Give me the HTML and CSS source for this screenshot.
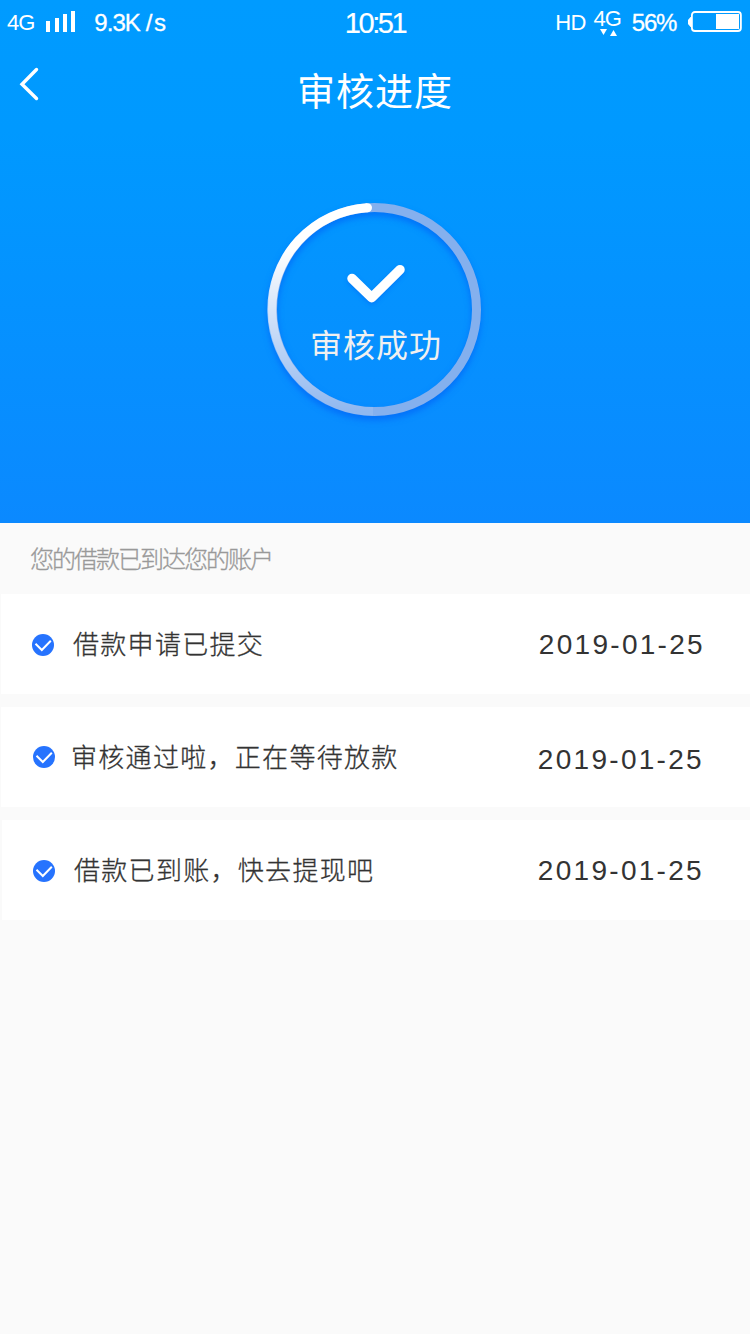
FILE: index.html
```
<!DOCTYPE html>
<html lang="zh-CN">
<head>
    <meta charset="UTF-8">
    <meta name="viewport" content="width=device-width, initial-scale=1.0">
    <title>审核进度</title>
    <link rel="stylesheet" href="styles.css">
</head>
<body>

    <div class="hero">
        <div class="statusBar">
            <div class="statusLeft">
                <span class="net">4G</span>
                <svg class="signal" width="30" height="21" viewBox="0 0 30 21" fill="#fff">
                    <rect x="0" y="10" width="4" height="11"/>
                    <rect x="9" y="7" width="4" height="14"/>
                    <rect x="17" y="3" width="4" height="18"/>
                    <rect x="25" y="0" width="4" height="21"/>
                </svg>
                <span class="speed">9.3K<span class="unit">/s</span></span>
            </div>
            <div class="time">10:51</div>
            <div class="statusRight">
                <span class="hd">HD</span>
                <div class="data">
                    <span class="net">4G</span>
                    <svg width="17" height="7" viewBox="0 0 17 7" fill="#fff">
                        <path d="M0 0h7L3.500 6z"/>
                        <path d="M10 7h7L13.500 1z"/>
                    </svg>
                </div>
                <span class="percent">56%</span>
                <svg class="battery" width="54" height="21" viewBox="0 0 54 21">
                    <path d="M4 6H2.500L0 9v4l2.500 3H4z" fill="#fff"/>
                    <rect x="3.900" y="1" width="49" height="19" rx="3" fill="none" stroke="#fff" stroke-width="1.800"/>
                    <rect x="28" y="3" width="23" height="15" fill="#fff"/>
                </svg>
            </div>
        </div>

        <div class="navBar">
            <svg class="back" width="20" height="34" viewBox="0 0 20 34">
                <path d="M17.500 2.500L3 17.200 17.500 31.500" fill="none" stroke="#fff" stroke-width="3.400" stroke-linecap="round"/>
            </svg>
            <h1>审核进度</h1>
        </div>

        <div class="progress">
            <svg class="ring" width="213" height="213" viewBox="0 0 213 213" fill="none" stroke-width="9">
                <defs>
                    <linearGradient id="fade" x1="0" y1="0" x2="0" y2="1">
                        <stop offset="0.200" stop-color="#fff"/>
                        <stop offset="1" stop-color="#fff" stop-opacity="0.100"/>
                    </linearGradient>
                </defs>
                <circle cx="106.500" cy="106.500" r="102" stroke="#84b0ee"/>
                <path d="M105 208.500A102 102 0 0 1 99.500 4.700" stroke="url(#fade)"/>
                <circle cx="99.500" cy="4.700" r="4.500" fill="#fff" stroke="none"/>
            </svg>
            <svg class="tick" width="60" height="40" viewBox="0 0 60 40">
                <path d="M6 14.500L25.700 33.700 54 5.700" fill="none" stroke="#fff" stroke-width="9.500" stroke-linecap="round" stroke-linejoin="round"/>
            </svg>
            <p>审核成功</p>
        </div>
    </div>

    <p class="tip">您的借款已到达您的账户</p>

    <div class="list">
        <div class="item item1">
            <svg class="dot" width="22" height="22" viewBox="0 0 22 22">
                <circle cx="11" cy="11" r="11" fill="#2673fe"/>
                <path d="M3.500 9.800L9.800 16 18.800 6.800" fill="none" stroke="#fff" stroke-width="2"/>
            </svg>
            <span class="text">借款申请已提交</span>
            <span class="date">2019-01-25</span>
        </div>
        <div class="item item2">
            <svg class="dot" width="22" height="22" viewBox="0 0 22 22">
                <circle cx="11" cy="11" r="11" fill="#2673fe"/>
                <path d="M3.500 9.800L9.800 16 18.800 6.800" fill="none" stroke="#fff" stroke-width="2"/>
            </svg>
            <span class="text">审核通过啦，正在等待放款</span>
            <span class="date">2019-01-25</span>
        </div>
        <div class="item item3">
            <svg class="dot" width="22" height="22" viewBox="0 0 22 22">
                <circle cx="11" cy="11" r="11" fill="#2673fe"/>
                <path d="M3.500 9.800L9.800 16 18.800 6.800" fill="none" stroke="#fff" stroke-width="2"/>
            </svg>
            <span class="text">借款已到账，快去提现吧</span>
            <span class="date">2019-01-25</span>
        </div>
    </div>

</body>
</html>
```

FILE: styles.css
```
*{
    box-sizing: border-box;
}

body{
    margin: 0;
    min-height: 100vh;
    background-color: #fafafa;
    font-family: "Liberation Sans", "Noto Sans CJK SC", sans-serif;
}

h1, p{
    margin: 0;
}

svg{
    display: block;
    flex-shrink: 0;
}

.hero{
    height: 523px;
    color: #fff;
    background: linear-gradient(#009bff 0%, #0099ff 25%, #0b89ff 100%);
}

/* status bar */
.statusBar{
    height: 46px;
    display: grid;
    grid-template-columns: 1fr auto 1fr;
    align-items: start;
    line-height: 24px;
    white-space: nowrap;
}

.statusLeft{
    display: flex;
    padding: 11px 0 0 7px;
}

.net, .hd{
    font-size: 22px;
    letter-spacing: -1px;
}

.signal{
    margin-left: 12px;
}

.speed{
    margin-left: 18px;
    font-size: 24px;
    letter-spacing: -1px;
    -webkit-text-stroke: 0.3px #fff;
}

.unit{
    margin-left: 6px;
    letter-spacing: 1.5px;
}

.time{
    padding-top: 11px;
    font-size: 29px;
    letter-spacing: -2.400px;
    -webkit-text-stroke: 0.2px #fff;
}

.statusRight{
    display: flex;
    justify-content: flex-end;
    padding: 11px 8px 0 0;
}

.hd{
    letter-spacing: -0.800px;
}

.data{
    margin: -4px 0 0 8px;
}

.data .net{
    display: block;
    height: 22px;
}

.data svg{
    margin-left: 6px;
}

.percent{
    margin-left: 11px;
    font-size: 24px;
    letter-spacing: -1.3px;
    -webkit-text-stroke: 0.3px #fff;
}

.battery{
    margin-left: 12px;
}

/* title */
.navBar{
    height: 92px;
    display: grid;
    grid-template-columns: 1fr auto 1fr;
    align-items: start;
}

.back{
    margin: 21px 0 0 19px;
}

.navBar h1{
    padding-top: 18px;
    font-size: 38px;
    font-weight: 400;
    line-height: 56px;
    letter-spacing: 1px;
}

/* progress ring */
.progress{
    position: relative;
    width: 213px;
    height: 213px;
    margin: 65px 0 0 268px;
    padding-top: 61px;
    display: flex;
    flex-direction: column;
    align-items: center;
}

.ring{
    position: absolute;
    top: 0;
    left: 0;
    overflow: visible;
    filter: drop-shadow(0 4px 3px rgba(0, 90, 245, 0.6));
}

.tick{
    margin-left: 3px;
    filter: drop-shadow(0 2px 2px rgba(0, 90, 245, 0.4));
}

.progress p{
    margin: 18px 0 0 3px;
    color: #f0f0f0;
    font-size: 32px;
    line-height: 48px;
    letter-spacing: 1px;
}

.tip{
    height: 71px;
    padding: 1px 0 0 30px;
    color: #999;
    font-size: 24px;
    font-weight: 300;
    line-height: 71px;
    letter-spacing: -2px;
    -webkit-text-stroke: 0.3px #999;
}

/* steps */
.list{
    display: flex;
    flex-direction: column;
    gap: 13px;
}

.item{
    height: 100px;
    margin-left: 1px;
    padding: 2px 45px 0 31px;
    display: flex;
    align-items: center;
    background-color: #fff;
    color: #333;
}

.item2{
    padding-left: 32px;
    padding-right: 46px;
}

.item2 .dot{
    margin-top: -2px;
}

.item3{
    margin-left: 2px;
    padding-right: 46px;
}

.text{
    margin: -5px 0 0 19px;
    font-size: 26px;
    font-weight: 300;
    letter-spacing: 1.3px;
    -webkit-text-stroke: 0.3px #333;
}

.item2 .text{
    margin-left: 16px;
}

.date{
    margin-left: auto;
    font-size: 28px;
    letter-spacing: 2.300px;
}

.item2 .date{
    padding-top: 3px;
}
```
